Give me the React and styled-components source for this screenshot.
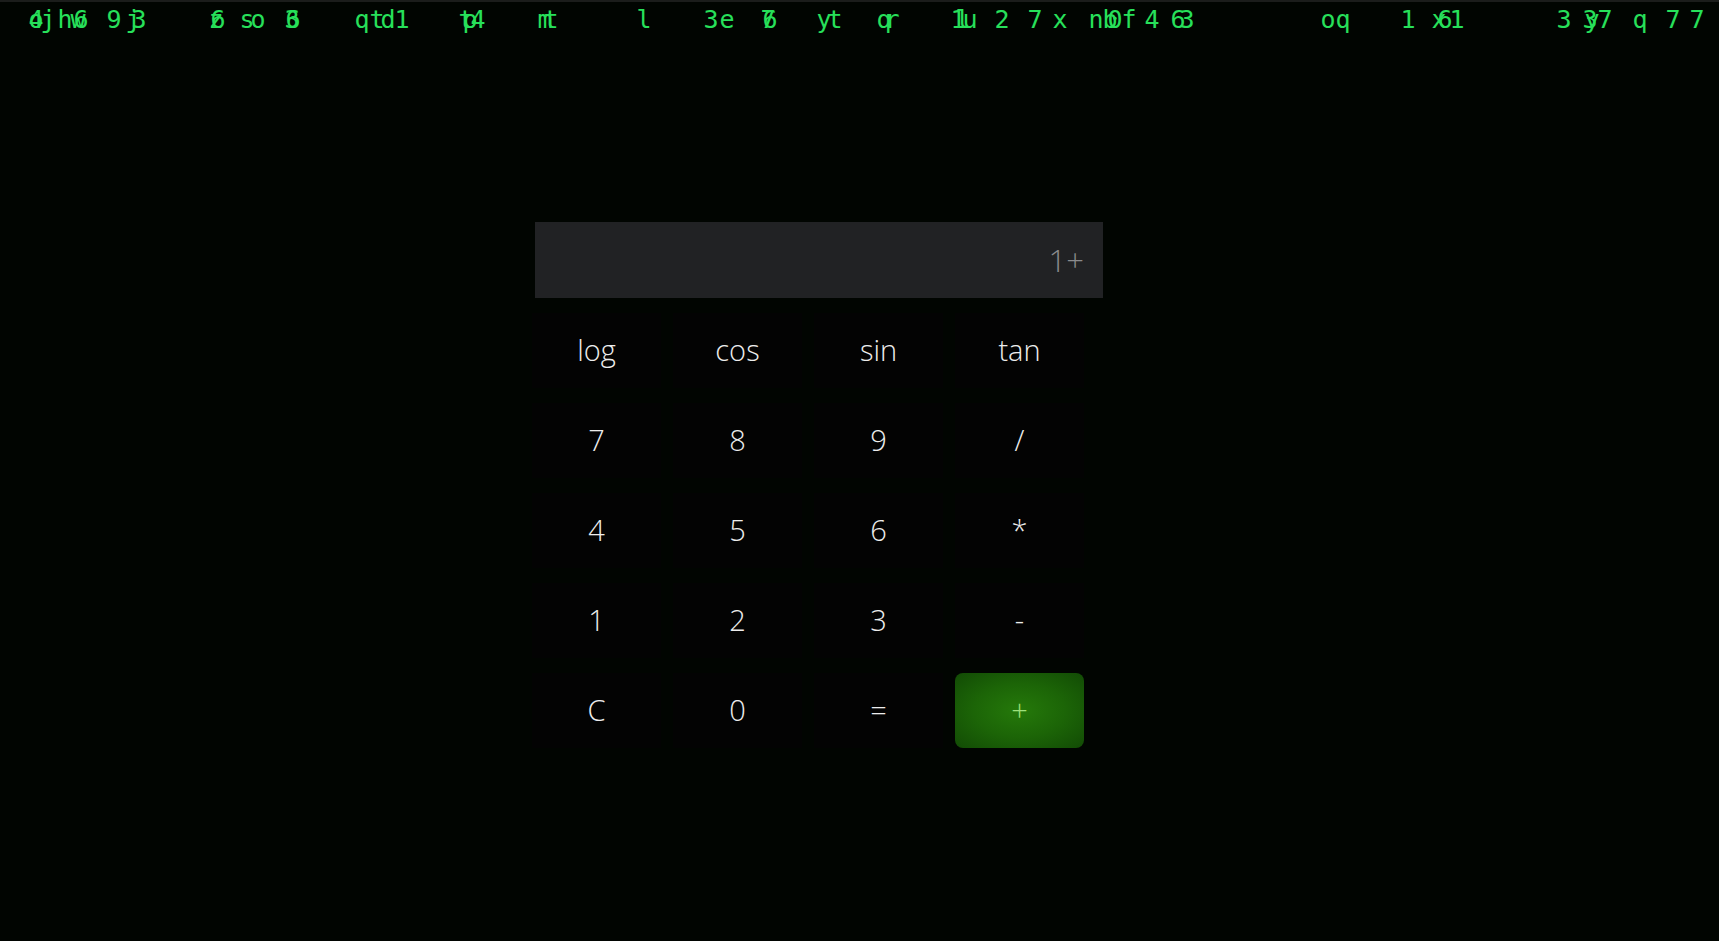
import React from "react";
import styled, { createGlobalStyle } from "styled-components";

const Global = createGlobalStyle`
  html, body {
    margin: 0;
    padding: 0;
    background: #010501;
    height: 100%;
  }
  #root {
    min-height: 100vh;
  }
`;

const Page = styled.div`
  position: relative;
  width: 100%;
  min-height: 941px;
  background: #010501;
  border-top: 2px solid #1b1d1b;
  box-sizing: border-box;
  overflow: hidden;
`;

const Rain = styled.div`
  position: absolute;
  left: 0;
  top: 0;
  right: 0;
  height: 44px;
  pointer-events: none;
`;

const Glyph = styled.span`
  position: absolute;
  top: 5px;
  width: 16px;
  margin-left: -8px;
  text-align: center;
  font-family: "DejaVu Sans Mono", monospace;
  font-size: 25px;
  line-height: 25px;
  color: #27e05a;
`;

const Calculator = styled.main`
  display: flex;
  flex-direction: column;
  align-items: flex-start;
  gap: 15px;
  padding: 220px 0 0 532px;
  font-family: "Open Sans", "Noto Sans", sans-serif;
`;

const Display = styled.div`
  box-sizing: border-box;
  margin-left: 3px;
  width: 568px;
  height: 76px;
  background: #212224;
  display: flex;
  align-items: center;
  justify-content: flex-end;
  padding-right: 19px;
  font-size: 31px;
  font-weight: 300;
  color: #8a8b8d;
`;

const Keys = styled.div`
  display: grid;
  grid-template-columns: repeat(4, 129px);
  grid-auto-rows: 75px;
  column-gap: 12px;
  row-gap: 15px;
`;

const Key = styled.button`
  border: none;
  margin: 0;
  padding: 0 0 2px;
  border-radius: ${(p) => (p.$accent ? "8px" : "0")};
  background: ${(p) =>
    p.$accent
      ? "radial-gradient(ellipse at center, #25790a 0%, #1c6507 50%, #124b05 100%)"
      : "#030303"};
  color: ${(p) => (p.$accent ? "#9ee07c" : "#ededed")};
  font-family: "Open Sans", "Noto Sans", sans-serif;
  font-size: 29px;
  font-weight: 300;
  display: flex;
  align-items: center;
  justify-content: center;
  cursor: pointer;
`;

const glyphs = [
  [36, "4"], [36, "o"], [48, "j"], [65, "h"], [78, "w"], [81, "6"],
  [114, "9"], [133, "j"], [139, "3"],
  [216, "z"], [218, "6"], [247, "s"], [258, "o"], [292, "3"], [293, "6"],
  [362, "q"], [377, "t"], [388, "d"], [402, "1"],
  [466, "t"], [470, "p"], [478, "4"],
  [545, "m"], [551, "t"],
  [644, "l"], [711, "3"], [727, "e"], [768, "7"], [770, "6"],
  [824, "y"], [835, "t"], [884, "q"], [892, "r"],
  [958, "1"], [963, "l"], [970, "u"],
  [1002, "2"], [1035, "7"], [1060, "x"],
  [1096, "n"], [1110, "b"], [1115, "0"], [1129, "f"], [1152, "4"],
  [1178, "6"], [1187, "3"],
  [1328, "o"], [1343, "q"], [1408, "1"],
  [1439, "x"], [1445, "6"], [1457, "1"],
  [1564, "3"], [1590, "3"], [1592, "y"], [1605, "7"],
  [1640, "q"], [1673, "7"], [1697, "7"],
];

const keys = [
  "log", "cos", "sin", "tan",
  "7", "8", "9", "/",
  "4", "5", "6", "*",
  "1", "2", "3", "-",
  "C", "0", "=", "+",
];

export default function App() {
  return (
    <>
      <Global />
      <Page>
        <Rain aria-hidden="true">
          {glyphs.map(([x, c], i) => (
            <Glyph key={i} style={{ left: x }}>
              {c}
            </Glyph>
          ))}
        </Rain>
        <Calculator>
          <Display>1+</Display>
          <Keys>
            {keys.map((k) => (
              <Key key={k} $accent={k === "+"}>
                {k}
              </Key>
            ))}
          </Keys>
        </Calculator>
      </Page>
    </>
  );
}
